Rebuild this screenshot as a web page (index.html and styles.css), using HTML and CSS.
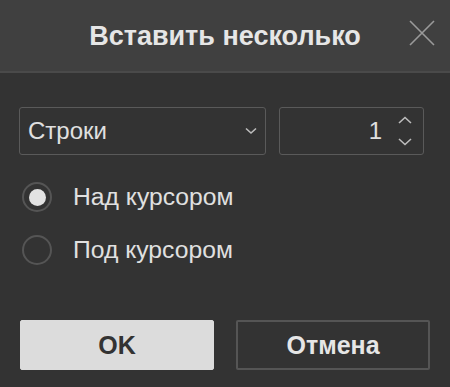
FILE: index.html
```html
<!DOCTYPE html>
<html lang="ru">
  <head>
    <meta charset="UTF-8">
    <title>Вставить несколько</title>
    <link rel="stylesheet" href="styles.css">
  </head>
  <body>
    <div class="dialog">
      <div class="dialog-header">
        <span class="dialog-title">Вставить несколько</span>
        <button class="close-btn" aria-label="Закрыть">
          <svg width="26" height="26" viewBox="0 0 26 26"><path d="M1 1 L25 25 M25 1 L1 25" stroke="#9a9a9a" stroke-width="1.6" fill="none"/></svg>
        </button>
      </div>
      <div class="dialog-body">
        <div class="champs">
          <div class="select">
            <span>Строки</span>
            <svg width="12" height="8" viewBox="0 0 12 8"><path d="M1 1.5 L6 6 L11 1.5" stroke="#bdbdbd" stroke-width="1.6" fill="none"/></svg>
          </div>
          <div class="nombre">
            <span>1</span>
            <div class="spin">
              <svg width="14" height="8" viewBox="0 0 14 8"><path d="M1 7 L7 1.5 L13 7" stroke="#bdbdbd" stroke-width="1.6" fill="none"/></svg>
              <svg width="14" height="8" viewBox="0 0 14 8"><path d="M1 1 L7 6.5 L13 1" stroke="#bdbdbd" stroke-width="1.6" fill="none"/></svg>
            </div>
          </div>
        </div>
        <label class="radio checked"><span class="rond"></span>Над курсором</label>
        <label class="radio"><span class="rond"></span>Под курсором</label>
      </div>
      <div class="dialog-footer">
        <button class="btn btn-ok">OK</button>
        <button class="btn btn-annuler">Отмена</button>
      </div>
    </div>
  </body>
</html>
```

FILE: styles.css
```css
html, body {
  margin: 0;
  background: #333333;
}
body {
  font-family: "Liberation Sans", Arial, sans-serif;
  color: #e0e0e0;
}
.dialog {
  width: 450px;
  height: 387px;
  display: flex;
  flex-direction: column;
}
.dialog-header {
  height: 71px;
  background: #404040;
  border-bottom: 2px solid #4a4a4a;
  display: flex;
  align-items: center;
  justify-content: center;
  position: relative;
}
.dialog-title {
  font-size: 27px;
  font-weight: bold;
  color: #e6e6e6;
  margin-top: 1px;
}
.close-btn {
  position: absolute;
  right: 15px;
  top: 20px;
  background: none;
  border: 0;
  padding: 0;
  width: 26px;
  height: 26px;
}
.close-btn svg {
  display: block;
}
.dialog-body {
  padding: 34px 20px 0 19px;
}
.champs {
  display: flex;
  gap: 13px;
  margin-bottom: 27px;
}
.select, .nombre {
  border: 1px solid #5a5a5a;
  border-radius: 3px;
  display: flex;
  align-items: center;
  box-sizing: border-box;
  height: 48px;
  font-size: 24px;
  color: #e0e0e0;
}
.select {
  width: 247px;
  padding: 0 8px 0 8px;
  justify-content: space-between;
}
.nombre {
  width: 145px;
  justify-content: flex-end;
  padding-right: 11px;
}
.nombre span {
  margin-right: 16px;
}
.spin {
  display: flex;
  flex-direction: column;
  gap: 14px;
}
.spin svg, .select svg {
  display: block;
}
.radio {
  display: flex;
  align-items: center;
  font-size: 24.7px;
  height: 30px;
  margin-bottom: 23px;
  color: #e0e0e0;
}
.rond {
  width: 26px;
  height: 26px;
  border: 2px solid #555555;
  border-radius: 50%;
  margin: 0 21px 0 3px;
  display: flex;
  align-items: center;
  justify-content: center;
}
.radio.checked .rond::after {
  content: "";
  width: 17px;
  height: 17px;
  border-radius: 50%;
  background: #e2e2e2;
}
.dialog-footer {
  margin-top: auto;
  display: flex;
  gap: 22px;
  padding: 0 20px 17px 20px;
}
.btn {
  height: 50px;
  width: 194px;
  font-family: "Liberation Sans", Arial, sans-serif;
  font-size: 25px;
  font-weight: bold;
  border-radius: 2px;
}
.btn-ok {
  background: #dcdcdc;
  border: 1px solid #dcdcdc;
  color: #333333;
}
.btn-annuler {
  background: #333333;
  border: 2px solid #555555;
  color: #e6e6e6;
}
```
